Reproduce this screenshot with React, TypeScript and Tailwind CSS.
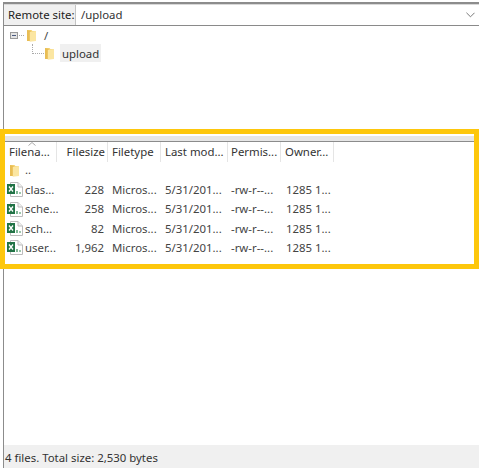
const font = "font-['Noto_Sans','Open_Sans',sans-serif]";

const columns = [
  { label: "Filena...", width: "w-[52px]", align: "pl-[4px]" },
  { label: "Filesize", width: "w-[51px]", align: "justify-end pr-[2px]" },
  { label: "Filetype", width: "w-[53px]", align: "pl-[4px]" },
  { label: "Last mod...", width: "w-[67px]", align: "pl-[4px]" },
  { label: "Permis...", width: "w-[53px]", align: "pl-[3px]" },
  { label: "Owner...", width: "w-[53px]", align: "pl-[4px]" },
];

const files = [
  { name: "clas...", size: "228" },
  { name: "sche...", size: "258" },
  { name: "sch...", size: "82" },
  { name: "user...", size: "1,962" },
];

function Folder({ className }: { className: string }) {
  return (
    <svg viewBox="0 0 10 14" className={className}>
      <path d="M0 1 H5 L6 2 H10 V13 H0 Z" fill="#f5d477" />
      <path d="M3 3 L10 2 V13 L3 14 Z" fill="#fbe6a2" />
      <path d="M0 1 V13 H3 V3 L5 2 Z" fill="#e8bd55" />
    </svg>
  );
}

function ExcelIcon() {
  return (
    <svg viewBox="0 0 16 15" className="w-[16px] h-[15px] shrink-0">
      <path d="M3.5 .5 H11 L15.5 5 V14.5 H3.5 Z" fill="#fff" stroke="#bcbcbc" />
      <path d="M11 .5 V5 H15.5" fill="#f0f0f0" stroke="#bcbcbc" />
      <rect x="9" y="9" width="2" height="3" fill="#7fb795" />
      <rect x="12" y="10" width="2" height="2" fill="#9cc7ac" />
      <rect x="0" y="2" width="8" height="10" fill="#217346" />
      <path d="M2 4.5 L6 9.5 M6 4.5 L2 9.5" stroke="#fff" strokeWidth="1.3" />
    </svg>
  );
}

function Row({ children }: { children: React.ReactNode }) {
  return <div className="flex items-center h-[19.33px] whitespace-nowrap">{children}</div>;
}

export default function App() {
  return (
    <div className={`relative w-[479px] h-[475px] bg-white overflow-hidden text-[11.4px] leading-[16px] text-[#444] ${font}`}>
      <div className="flex flex-col h-[466px] mt-[2px] ml-[3px] border-l border-t-2 border-[#8c8c8c]">
        {/* remote site bar */}
        <div className="flex items-stretch h-[22px] shrink-0 border-b border-[#8a8a8a] border-t border-t-[#d8d8d8]">
          <div className="w-[72px] bg-[#f0f0f0] pl-[4px] flex items-center whitespace-nowrap text-[#222] border-r border-[#c4c4c4]">Remote site:</div>
          <div className="flex-1 flex items-center pl-[5px] text-[#333]">/upload</div>
          <svg viewBox="0 0 10 6" className="w-[9px] h-[6px] self-center mr-[4px]">
            <path d="M.5 .5 L5 5 L9.5 .5" fill="none" stroke="#777" strokeWidth="1.1" />
          </svg>
        </div>

        {/* tree */}
        <div className="h-[109px] shrink-0 pl-[6px]">
          <div className="flex items-center h-[18px]">
            <div className="w-[8px] h-[7px] border border-[#9a9a9a] bg-[#e4e4e4] flex items-center justify-center">
              <div className="w-[4px] h-px bg-[#4a5a80]" />
            </div>
            <div className="w-[5px] border-t border-dotted border-[#aaa] mx-[1px]" />
            <Folder className="w-[9px] h-[13px] ml-[2px]" />
            <span className="ml-[8px] pt-px">/</span>
          </div>
          <div className="flex items-center h-[18px] ml-[22px]">
            <div className="w-[12px] h-[10px] -mt-[9px] border-l border-b border-dotted border-[#aaa]" />
            <Folder className="w-[9px] h-[13px] ml-px" />
            <span className="ml-[6px] px-[2px] pt-px h-[18px] bg-[#f0f0f0] flex items-center text-[#333]">upload</span>
          </div>
        </div>

        {/* splitter */}
        <div className="h-[6px] shrink-0 bg-[#e6e6e6] border-b border-[#8c8c8c] mt-[1px]" />

        {/* file list */}
        <div className="flex-1 min-h-0 pl-px">
          <div className="relative flex h-[20px] items-center whitespace-nowrap text-[#333]">
            {columns.map((c) => (
              <div key={c.label} className={`${c.width} ${c.align} h-full flex items-center border-r border-[#e5e5e5]`}>
                {c.label}
              </div>
            ))}
            <svg viewBox="0 0 8 4" className="absolute left-[23px] top-0 w-[8px] h-[4px]">
              <path d="M.5 3.5 L4 .5 L7.5 3.5" fill="none" stroke="#aaa" />
            </svg>
          </div>
          <div className="-mt-px">
            <Row>
              <Folder className="w-[9px] h-[13px] ml-[5px]" />
              <span className="ml-[6px] -mt-[2px]">..</span>
            </Row>
            {files.map((f) => (
              <Row key={f.name}>
                <div className="w-[52px] flex items-center pl-[2px]">
                  <ExcelIcon />
                  <span className="ml-[2px]">{f.name}</span>
                </div>
                <div className="w-[51px] text-right pr-[4px]">{f.size}</div>
                <div className="w-[53px] pl-[4px]">Micros...</div>
                <div className="w-[67px] pl-[4px]">5/31/201...</div>
                <div className="w-[53px] pl-[3px]">-rw-r--...</div>
                <div className="w-[53px] pl-[5px]">1285 1...</div>
              </Row>
            ))}
          </div>
        </div>

        {/* status bar */}
        <div className="h-[23px] shrink-0 bg-[#f0f0f0] flex items-center pl-[1px] pt-[2px] text-[#333]">4 files. Total size: 2,530 bytes</div>
      </div>

      {/* highlight around the file list */}
      <div className="absolute left-0 top-[129px] w-[479px] h-[140px] border-[5px] border-[#fdc70c]" />
    </div>
  );
}
